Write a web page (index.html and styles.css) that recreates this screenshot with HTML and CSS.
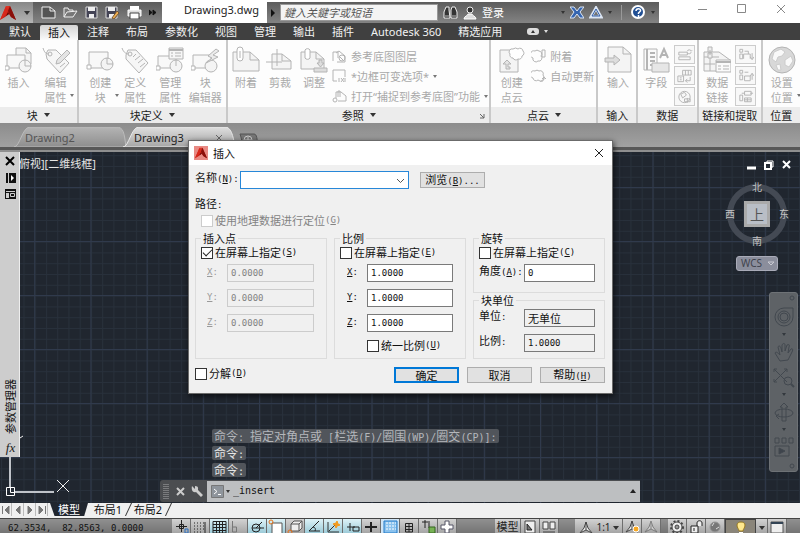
FILE: index.html
```html
<!DOCTYPE html>
<html lang="zh-CN">
<head>
<meta charset="utf-8">
<title>Drawing3.dwg</title>
<link rel="stylesheet" href="styles.css">
</head>
<body>
<svg class="defs" aria-hidden="true">
  <defs>
    <linearGradient id="red" x1="0" y1="0" x2="1" y2="1"><stop offset="0" stop-color="#f0503a"/><stop offset=".5" stop-color="#c81e14"/><stop offset="1" stop-color="#7c0c08"/></linearGradient>
    <linearGradient id="tabOff" x1="0" y1="0" x2="0" y2="1"><stop offset="0" stop-color="#b4b4b4"/><stop offset="1" stop-color="#8e8e8e"/></linearGradient>
    <linearGradient id="tabOn" x1="0" y1="0" x2="0" y2="1"><stop offset="0" stop-color="#dedede"/><stop offset="1" stop-color="#a6a6a6"/></linearGradient>
    <symbol id="logo" viewBox="0 0 16 16"><path d="M0 15 L6 1 H10 L16 15 L11 12 L9 9 L5 12 Z" fill="url(#red)"/><path d="M6 1 L8 8 L0 15Z" fill="#d8281c"/><path d="M10 1 L16 15 L11 12 L8 6Z" fill="#8a0f0a"/><path d="M8 7 L9 9 L6 11Z" fill="#5d0a06"/></symbol>
    <symbol id="block" viewBox="0 0 28 28"><path d="M11 9V2H21L26 7V18" fill="#f4f4f4"/><path d="M21 2V7H26"/><path d="M2 9H20V22H2Z" fill="#f8f8f8"/><circle cx="20" cy="20" r="6" fill="#f4f4f4"/><path d="M20 20V14M20 20H26"/><path d="M0 20H4V24H0Z" fill="#fff"/></symbol>
    <symbol id="create" viewBox="0 0 28 28"><path d="M3 6H22V22H3Z" fill="#f8f8f8"/><circle cx="21" cy="18" r="6" fill="#f4f4f4"/><path d="M21 18V12M21 18H27"/><path d="M1 19H5V23H1Z" fill="#fff"/></symbol>
    <symbol id="tag" viewBox="0 0 28 28"><path d="M5 9L7 4L15 4L27 17L18 27L5 13Z" fill="#f6f6f6"/><circle cx="9" cy="8" r="2"/><path d="M8 8C4 8 2 5 1 2M12 11L15 8M14 14L19 10M17 17L22 13M19 21L24 17" /></symbol>
    <symbol id="tagpen" viewBox="0 0 28 28"><path d="M4 8L6 4L14 4L27 17L18 27L5 13Z" fill="#f6f6f6"/><circle cx="8" cy="8" r="2"/><path d="M7 8C3 8 2 5 1 2M18 21L23 17"/><path d="M14 18L15 14L25 4L28 7L18 17Z" fill="#e4e4e4"/></symbol>
    <symbol id="manage" viewBox="0 0 28 28"><path d="M2 10H20V22H2Z" fill="#f8f8f8"/><circle cx="20" cy="20" r="6" fill="#f4f4f4"/><path d="M20 20V14"/><path d="M0 20H4V24H0Z" fill="#fff"/><path d="M13 2H27V13H13Z" fill="#f6f6f6"/><path d="M13 4H27" stroke-width="2"/><path d="M15 7H17M19 7H25M15 10H17M19 10H25"/></symbol>
    <symbol id="editor" viewBox="0 0 28 28"><path d="M2 9H20V22H2Z" fill="#f8f8f8"/><circle cx="20" cy="20" r="6" fill="#f4f4f4"/><path d="M0 20H4V24H0Z" fill="#fff"/><path d="M25 3L17 10L21 12L15 17L27 11L22 9L28 5Z" fill="#ececec"/></symbol>
    <symbol id="clip" viewBox="0 0 28 28"><path d="M1 6H18L27 14V25H1Z" fill="#f4f4f4"/><path d="M18 6V14H27"/><path d="M5 12V4A3 3 0 0 1 11 4V12A3 3 0 0 1 5 12ZM8 5V12" fill="#fff"/></symbol>
    <symbol id="crop" viewBox="0 0 28 28"><path d="M6 8H16L25 15V23H6Z" fill="#f4f4f4"/><path d="M16 8V15H25M0 16H16M11 3V20"/></symbol>
    <symbol id="adjust" viewBox="0 0 28 28"><path d="M1 6H16L24 13V23H1Z" fill="#f4f4f4"/><path d="M16 6V13H24"/><path d="M5 12V4A3 3 0 0 1 10 4V12A3 3 0 0 1 5 12Z" fill="#fff"/><path d="M14 26H27V22H14ZM17 17H19V14H22V17H24L20.500 21Z" fill="#ddd"/></symbol>
    <symbol id="cloud" viewBox="0 0 28 28"><path d="M2 4H20V26H2Z" fill="#f4f4f4"/><path d="M15 3A4 4 0 0 1 20 3A3 3 0 0 1 25 5A3 3 0 0 1 24 10A3 3 0 0 1 20 13A3 3 0 0 1 15 12A3 3 0 0 1 12 8A3 3 0 0 1 15 3Z" fill="#fff"/><path d="M12 23H8V18H5L9 14L13 18H10V21H12Z" fill="#e4e4e4"/></symbol>
    <symbol id="import" viewBox="0 0 28 28"><path d="M4 1H19L27 8V26H4Z" fill="#f4f4f4"/><path d="M19 1V8H27"/><path d="M1 12H10V9L16 14L10 19V16H1Z" fill="#ddd"/></symbol>
    <symbol id="field" viewBox="0 0 28 28"><path d="M2 3H15V24H2Z" fill="#fafafa"/><path d="M5 3V24M8 7H13M8 11H13M8 15H13M8 19H13" stroke-width="2"/><path d="M18 12L22 3L26 12M20 9H24" stroke-width="2"/><path d="M10 17H27V26H10Z" fill="#e6e6e6"/></symbol>
    <symbol id="datalink" viewBox="0 0 28 28"><path d="M1 6H16L27 14V25H1Z" fill="#f4f4f4"/><path d="M1 11H16M1 18H12M7 6V25"/><path d="M5 1H9V6H5ZM5 7H9V12H5ZM7 4V9" fill="#eee"/><path d="M13 14H28V26H13Z" fill="#fafafa"/><path d="M13 16H28" stroke-width="2"/><path d="M15 20H18M20 20H26M15 23H18M20 23H26"/></symbol>
    <symbol id="globe" viewBox="0 0 28 28"><circle cx="14" cy="14" r="13" fill="#d8d8d8"/><path d="M6 6L13 3L17 6L14 10L10 11L8 16L4 13ZM17 14L23 10L25 15L21 21L17 19ZM8 19L12 18L13 24L10 24Z" fill="#f9f9f9" stroke="#ccc"/></symbol>
    <symbol id="scale" viewBox="0 0 16 16"><path d="M8 2L10 8L14 13L8 10L2 13L6 8Z" fill="#eee" stroke="#444"/><path d="M8 2V10" stroke="#444"/></symbol>
    <pattern id="minor" width="11.24" height="10.8" patternUnits="userSpaceOnUse" x="1" y="3.2"><path d="M.5 0V10.8M0 .5H11.24" stroke="#28303b" fill="none"/></pattern>
    <pattern id="major" width="56.2" height="54" patternUnits="userSpaceOnUse" x="34.2" y="35"><path d="M.5 0V54M0 .5H56.2" stroke="#303a4c" fill="none"/></pattern>
  </defs>
</svg>

<div class="app">
  <header class="titlebar">
    <button class="appmenu" aria-label="应用程序菜单"><svg width="16" height="18"><use href="#logo"/></svg><i class="tri"></i></button>
    <nav class="quick">
      <svg width="15" height="13" viewBox="0 0 15 13"><path d="M1 1H9L14 5V12H1Z" fill="#555" stroke="#eee"/><path d="M9 1V5H14" fill="none" stroke="#eee"/></svg>
      <svg width="15" height="13" viewBox="0 0 15 13"><path d="M1 11V2H5L6 4H10V6M1 11L4 6L14 5L10 11Z" fill="#777" stroke="#eee"/></svg>
      <svg width="13" height="13" viewBox="0 0 13 13"><path d="M1 1H12V12H1Z" fill="#445" stroke="#ddd"/><path d="M3 1H10V5H3ZM4 8H9V12H4Z" fill="#eee"/></svg>
      <svg width="15" height="13" viewBox="0 0 15 13"><path d="M1 1H12V12H1Z" fill="#445" stroke="#ddd"/><path d="M3 1H10V5H3ZM4 8H9V12H4Z" fill="#eee"/><path d="M7 12L12 5L14 7L9 13Z" fill="#f0b050" stroke="#753"/></svg>
      <svg width="15" height="13" viewBox="0 0 15 13"><path d="M3 0H12V4H3Z" fill="#fff"/><path d="M1 4H14V10H1Z" fill="#ddd" stroke="#fff"/><path d="M3 7H12V13H3Z" fill="#fff" stroke="#444"/></svg>
      <svg width="8" height="7" viewBox="0 0 8 7"><path d="M0 1L3 3.5L0 6ZM4 1L7 3.5L4 6Z" fill="#111" stroke="#111"/></svg>
    </nav>
    <span class="filename">Drawing3.dwg</span>
    <div class="infocenter">
      <i class="tri right"></i>
      <input class="search" type="text" placeholder="鍵入关鍵字或短语" aria-label="搜索">
      <svg width="15" height="14" viewBox="0 0 15 14"><path d="M3 1H6V4L7 12H1V6ZM9 1H12L14 6V12H8V4Z" fill="#333" stroke="#eee"/><path d="M2 9H6V12H2ZM9 9H13V12H9Z" fill="#777"/></svg>
      <svg width="14" height="14" viewBox="0 0 14 14"><circle cx="7" cy="4" r="3" fill="#333" stroke="#eee"/><path d="M1 13C1 10 5 10 5 8H9C9 10 13 10 13 13Z" fill="#ddd" stroke="#fff"/></svg>
      <a class="signin" href="#">登录</a>
      <i class="tri small push"></i>
      <svg width="14" height="13" viewBox="0 0 14 13"><path d="M0 1H4L7 5L10 1H14L10 6L14 12H10L7 8L4 12H0L4 6Z" fill="#3565b0" stroke="#dce6f4"/></svg>
      <svg width="14" height="13" viewBox="0 0 14 13"><path d="M7 2L12 11H2Z" fill="none" stroke="#dce6f4" stroke-width="3"/><path d="M7 3L11 10H3Z" fill="none" stroke="#335fa8"/></svg>
      <i class="tri small"></i><i class="vline"></i>
      <svg width="15" height="15" viewBox="0 0 15 15"><circle cx="7" cy="7" r="6" fill="#204f94" stroke="#fff" stroke-width="2"/><path d="M5 6C5 3 10 3 9.500 6L7.500 8V9M7.500 10V12" fill="none" stroke="#fff" stroke-width="1.500"/></svg>
      <i class="tri small"></i>
    </div>
    <div class="winctl">
      <button aria-label="最小化"><svg width="10" height="10"><path d="M0 5.500H9"/></svg></button>
      <button aria-label="最大化"><svg width="10" height="10"><path d="M.5.5H8.500V8.500H.5Z"/></svg></button>
      <button aria-label="关闭"><svg width="10" height="10"><path d="M1 1L9 9M9 1L1 9"/></svg></button>
    </div>
  </header>

  <nav class="tabs">
    <button>默认</button><button class="on">插入</button><button>注释</button><button>布局</button><button>参数化</button><button>视图</button><button>管理</button><button>输出</button><button>插件</button><button>Autodesk 360</button><button>精选应用</button>
    <i class="pill"></i><i class="tri small light"></i>
  </nav>

  <section class="ribbon">
    <div class="panel p1"><div class="tools">
      <button class="tool"><svg><use href="#block"/></svg>插入</button>
      <button class="tool drop"><svg><use href="#tagpen"/></svg>编辑<br>属性</button>
    </div><h2>块<i class="tri"></i></h2></div>
    <div class="panel p2"><div class="tools">
      <button class="tool drop"><svg><use href="#create"/></svg>创建<br>块</button>
      <button class="tool"><svg><use href="#tag"/></svg>定义<br>属性</button>
      <button class="tool"><svg><use href="#manage"/></svg>管理<br>属性</button>
      <button class="tool"><svg><use href="#editor"/></svg>块<br>编辑器</button>
    </div><h2>块定义<i class="tri"></i></h2></div>
    <div class="panel p3"><div class="tools">
      <button class="tool"><svg><use href="#clip"/></svg>附着</button>
      <button class="tool"><svg><use href="#crop"/></svg>剪裁</button>
      <button class="tool"><svg><use href="#adjust"/></svg>调整</button>
      <div class="list">
        <button><svg viewBox="0 0 15 14"><path d="M1 12V3H6V9M4 4L7 2L13 7V13H5M7 7L11 11"/><circle cx="10" cy="9" r="3"/></svg>参考底图图层</button>
        <button><svg viewBox="0 0 15 14"><path d="M1 12V1H13V8M1 12H5M7 9V13M13 9V13M9 9L12 13M12 9L9 13"/></svg>*边框可变选项*<i class="tri small"></i></button>
        <button><svg viewBox="0 0 15 14"><path d="M4 9V3H9L14 7V12H6M6 8V2H8V8"/><circle cx="3" cy="11" r="2"/></svg>打开“捕捉到参考底图”功能<i class="tri small"></i></button>
      </div>
    </div><h2>参照<i class="tri"></i><svg class="launch" width="6" height="6" viewBox="0 0 6 6"><path d="M1 1L5 5M5 1V5H1"/></svg></h2></div>
    <div class="panel p4"><div class="tools">
      <button class="tool"><svg><use href="#cloud"/></svg>创建<br>点云</button>
      <div class="list">
        <button><svg viewBox="0 0 15 14"><path d="M4 2A3 3 0 0 1 8 2A3 3 0 0 1 10 7A3 3 0 0 1 7 12A3 3 0 0 1 2 9A3 3 0 0 1 4 2ZM11 1H14V8H11Z"/></svg>附着</button>
        <button><svg viewBox="0 0 15 14"><path d="M4 2A3 3 0 0 1 8 2A3 3 0 0 1 12 6A3 3 0 0 1 7 11A3 3 0 0 1 2 9A3 3 0 0 1 4 2ZM9 12C11 13 13 12 13 9M11 10L13 8L15 10"/></svg>自动更新</button>
      </div>
    </div><h2>点云<i class="tri"></i></h2></div>
    <div class="panel p5"><div class="tools">
      <button class="tool"><svg><use href="#import"/></svg>输入</button>
    </div><h2>输入</h2></div>
    <div class="panel p6"><div class="tools">
      <button class="tool"><svg><use href="#field"/></svg>字段</button>
      <div class="minis">
        <button aria-label="更新字段"><svg viewBox="0 0 18 16"><path d="M3 5H12V8H3ZM3 10H15V13H3Z"/><path d="M12 4C12 2 16 2 16 4L17 3M16 5C16 7 13 7 12 6"/></svg></button>
        <button aria-label="OLE 对象"><svg viewBox="0 0 18 16"><path d="M7 2H16V7H7ZM10 2V7M13 2V7M2 8H8V14H2ZM4 10H6M4 12H6M15 9V13H10M12 11L10 13L12 15"/></svg></button>
        <button aria-label="超链接"><svg viewBox="0 0 18 16"><circle cx="9" cy="8" r="6"/><path d="M5 5L9 3L11 6L7 9ZM9 10H15V13H9ZM12 9V14"/></svg></button>
      </div>
    </div><h2>数据</h2></div>
    <div class="panel p7"><div class="tools">
      <button class="tool"><svg><use href="#datalink"/></svg>数据<br>链接</button>
      <div class="minis">
        <button aria-label="从源下载"><svg viewBox="0 0 18 16"><path d="M3 2H6V5H3ZM3 7H6V12H3ZM8 4H12V7M7 12V7H14V12M16 6V12M14 10L16 13L18 10"/></svg></button>
        <button aria-label="上载到源"><svg viewBox="0 0 18 16"><path d="M3 2H6V5H3ZM3 7H6V12H3ZM8 4H12M8 13V8H14V13H8M16 12V6M14 8L16 5L18 8"/></svg></button>
        <button aria-label="提取数据"><svg viewBox="0 0 18 16"><path d="M8 2H15V6H8ZM3 6H6V12H3ZM8 9H15V13H8ZM8 11H15M11 9V13M5 4H8M14 4H17"/></svg></button>
      </div>
    </div><h2>链接和提取</h2></div>
    <div class="panel p8"><div class="tools">
      <button class="tool drop"><svg><use href="#globe"/></svg>设置<br>位置</button>
    </div><h2>位置</h2></div>
  </section>

  <nav class="doctabs">
    <button class="doc"><svg class="shape" viewBox="0 0 112 20" preserveAspectRatio="none"><path d="M0 20C6 20 8 0 16 0H102C110 0 110 6 112 20Z" fill="url(#tabOff)" stroke="#bbb"/></svg><span>Drawing2</span></button>
    <button class="doc on"><svg class="shape" viewBox="0 0 112 20" preserveAspectRatio="none"><path d="M0 20C6 20 8 0 16 0H102C108 0 110 8 112 20Z" fill="url(#tabOn)" stroke="#e8e8e8"/></svg><span>Drawing3</span><svg class="x" width="8" height="8"><path d="M1 1L7 7M7 1L1 7"/></svg></button>
    <button class="add" aria-label="新建"><svg width="20" height="16" viewBox="0 0 20 16"><path d="M1 3H15C18 3 18 8 19 16H8C3 16 3 8 1 3Z" fill="#777" stroke="#555"/><circle cx="9" cy="9" r="4" fill="none" stroke="#ccc"/><path d="M9 6V12M6 9H12" stroke="#ccc"/></svg></button>
  </nav>

  <main class="canvas">
    <svg class="grid" width="100%" height="100%"><rect width="100%" height="100%" fill="url(#minor)"/><rect width="100%" height="100%" fill="url(#major)"/></svg>
    <span class="viewlabel">俯视][二维线框]</span>
    <svg class="ucs" width="74" height="80" viewBox="0 0 74 80"><path d="M10 0V64M15 69H54" stroke="#bfc3c9" stroke-width="2"/><path d="M6.500 64.500H14.500V72.500H6.500ZM10.500 65V69.500H14" fill="none" stroke="#fff"/><path d="M57 57L69 69M69 57L57 69M20 15L23 13" stroke="#eee" fill="none"/></svg>
    <aside class="palette">
      <svg width="11" height="11" viewBox="0 0 11 11"><path d="M1 1L9 9M9 1L1 9" stroke="#000" stroke-width="2"/></svg>
      <svg width="10" height="10" viewBox="0 0 10 10"><path d="M0 0H2V10H0ZM3 0H10V10H3Z"/><path d="M5 2L8 5L5 8Z" fill="#fff"/></svg>
      <svg width="11" height="10" viewBox="0 0 11 10"><path d="M0 0H11V10H0Z"/><path d="M1 2.500H10M5.500 4.500H9.500V7.500H5.500Z" stroke="#ccc" fill="none"/><path d="M1 4H4V9H1Z" fill="#ccc"/></svg>
      <span class="ptitle">参数管理器</span>
      <i class="fx">fx</i>
    </aside>
    <div class="vpctl">
      <svg width="9" height="10"><path d="M0 8H9" stroke="#fff" stroke-width="3"/></svg>
      <svg width="10" height="10" viewBox="0 0 10 10"><path d="M3 2V1H9V7H8" stroke="#fff" fill="none"/><path d="M1 3H7V9H1Z" stroke="#fff" stroke-width="2" fill="none"/></svg>
      <svg width="9" height="10"><path d="M1 1L8 8M8 1L1 8" stroke="#fff" stroke-width="2"/></svg>
    </div>
    <div class="compass">
      <span class="n">北</span><span class="w">西</span>
      <button class="cube">上</button>
      <span class="e">东</span><span class="s">南</span>
    </div>
    <button class="wcs">WCS<svg width="8" height="5"><path d="M1 1H7L4 4Z"/></svg></button>
    <nav class="navbar">
      <svg class="knob" width="6" height="6"><circle cx="3" cy="3" r="2"/></svg>
      <svg width="20" height="20" viewBox="0 0 20 20"><path d="M10 1H19V10A9 9 0 1 1 10 1Z"/><circle cx="10" cy="10" r="6"/><circle cx="10" cy="10" r="4"/></svg>
      <i class="tri small"></i>
      <svg width="20" height="20" viewBox="0 0 20 20"><path d="M6 19L1 11C2 9 4 11 6 13L4 5C5 3 6 4 7 6L8 10V3C9 1 11 1 11 3V9L13 3C15 2 16 3 15 5L14 11L17 7C19 6 19 8 18 10L14 18Z"/></svg>
      <svg width="22" height="20" viewBox="0 0 22 20"><path d="M1 1L14 14M14 1L1 14M1 4V1H4M11 1H14V4M1 11V14H4"/><circle cx="15" cy="13" r="4"/><path d="M18 16L21 19" stroke-width="2"/></svg>
      <i class="tri small"></i>
      <svg width="20" height="20" viewBox="0 0 20 20"><path d="M8 19V5H6L10 1L14 5H12V19Z"/><ellipse cx="10" cy="11" rx="9" ry="4"/><path d="M5 12L2 14L5 17"/></svg>
      <i class="tri small"></i>
      <svg width="20" height="20" viewBox="0 0 20 20"><path d="M1 1H5V6H1ZM8 1H12V6H8ZM15 1H19V6H15ZM1 9H15V19H1Z"/><path d="M5 11L11 14L5 17Z" fill="#3e444c"/></svg>
      <svg class="knob" width="6" height="6"><circle cx="3" cy="3" r="2"/></svg>
    </nav>
    <div class="console">
      <p class="hist dim">命令<b>: </b>指定对角点或<b> [</b>栏选<b>(F)/</b>圈围<b>(WP)/</b>圈交<b>(CP)]:</b></p>
      <p class="hist">命令<b>:</b></p>
      <p class="hist">命令<b>:</b></p>
      <div class="cmd">
        <svg width="8" height="16" viewBox="0 0 8 16"><path d="M1 1V16M3 1V16M5 1V16" stroke="#aaa" stroke-dasharray="1 1"/></svg>
        <svg width="9" height="9"><path d="M1 1L8 8M8 1L1 8" stroke="#ccc" stroke-width="2"/></svg>
        <svg width="14" height="14" viewBox="0 0 14 14"><path d="M2 2L5 5V2C9 2 8 5 8 6L13 11L11 13L6 8C3 9 1 6 2 2Z" fill="#ccc"/></svg>
        <label class="entry"><svg width="13" height="13" viewBox="0 0 13 13"><path d="M.5.5H12.500V12.500H.5Z" fill="#8f959c" stroke="#777"/><path d="M3 4L6 6.500L3 9M7 9.500H10" fill="none" stroke="#fff"/></svg><i class="tri small"></i><input type="text" value="_insert" aria-label="命令"><i class="tri up"></i></label>
      </div>
    </div>
  </main>

  <nav class="layouts">
    <span class="steps">
      <button aria-label="第一个"><svg width="10" height="10"><path d="M1.500 1V9M8 1V9L4 5Z"/></svg></button><button aria-label="上一个"><svg width="10" height="10"><path d="M7 1V9L3 5Z"/></svg></button><button aria-label="下一个"><svg width="10" height="10"><path d="M3 1V9L7 5Z"/></svg></button><button aria-label="最后一个"><svg width="10" height="10"><path d="M8.500 1V9M2 1V9L6 5Z"/></svg></button>
    </span>
    <button class="lay on">模型</button><button class="lay">布局1</button><button class="lay">布局2</button>
  </nav>

  <footer class="status">
    <output>62.3534,  82.8563, 0.0000</output>
    <button><svg><path d="M3 7.500H14M8.500 1V13"/><path d="M6.500 5.500H10.500V9.500H6.500Z"/><path d="M12 10H15V14H12Z" stroke="#2a6fc0"/></svg></button>
    <button><svg><path d="M2 4H14M2 7H14M2 10H14M2 13H10" stroke-dasharray="1 2"/><path d="M13 3V14"/></svg></button>
    <button class="on"><svg><path d="M2 2.500H15V14H2ZM2 5.500H15M2 8.500H15M2 11.500H15M5.500 2V14M8.500 2V14M11.500 2V14"/></svg></button>
    <button><svg><path d="M2.500 2V13H6.500V8H2M6 13" stroke="#777"/></svg></button>
    <button class="on"><svg><circle cx="7" cy="9" r="4"/><path d="M3 9H15M7 9L13 3"/></svg></button>
    <button class="on"><svg><path d="M4 4H14V15H4Z" fill="#fff" stroke="#555"/><circle cx="3" cy="3" r="2" stroke="#e67318"/></svg></button>
    <button><svg><path d="M4 5L7 2H15V9L12 12H4ZM4 5H12V12M12 5L15 2" fill="#eee" stroke="#555"/><circle cx="3" cy="13" r="2" stroke="#e67318"/></svg></button>
    <button class="on"><svg><path d="M13 2L3 12H14M7 8C9 8 10 10 9 12"/></svg></button>
    <button class="on"><svg><path d="M3 3V13H14M4 12L10 6" stroke="#333"/><path d="M12 2L13 5L15 6L12 7L11 9L10 6L8 5L11 4Z" fill="#f39a1c" stroke="#f39a1c"/></svg></button>
    <button class="on"><svg><path d="M3 8H11M6 4V12M9 8H15V12H9Z"/></svg></button>
    <button><svg><path d="M2 8H14M8 3V13" stroke-width="2"/></svg></button>
    <button class="blue"><svg><path d="M2 2H15V14H2Z" fill="#8ac2ee" stroke="#247bc7"/><path d="M4 4H14M4 7H14M4 10H14" stroke="#fff" stroke-dasharray="2 1"/></svg></button>
    <button><svg><path d="M4.500 4.500H11.500V13H4.500ZM5 7.500H12M5 10.500H12M8 4V13"/></svg></button>
    <button><svg><path d="M2 3H10M5 1V9M9 4V9H13"/><path d="M9 8H15V14H9Z" fill="#77b255" stroke="#35651e"/></svg></button>
    <button><svg><path d="M6 2H10V6H14V10H10V14H6V10H2V6H6Z" fill="#fff" stroke="#556"/></svg></button>
    <i class="gap wide"></i>
    <button class="model">模型</button>
    <button><svg><path d="M3 2H13V14H3Z" fill="#eee" stroke="#444"/><path d="M5 5V11H10Z" fill="#777"/></svg></button>
    <button><svg><path d="M2 3H7V10H2ZM9 3H14V10H9ZM2 13H14" fill="#eee" stroke="#444"/></svg></button>
    <i class="gap"></i>
    <button class="ratio"><svg><use href="#scale"/></svg>1:1<i class="tri"></i></button>
    <button><svg><use href="#scale"/><circle cx="12" cy="10" r="3" fill="#f7a823" stroke="#fff"/></svg></button>
    <button><svg opacity=".5"><use href="#scale"/></svg></button>
    <i class="gap thin"></i>
    <button><svg><circle cx="8" cy="8" r="6" stroke="#444" stroke-width="2" stroke-dasharray="2 2"/><circle cx="8" cy="8" r="5" fill="#eee" stroke="#444"/><circle cx="8" cy="8" r="2" fill="#999" stroke="#444"/></svg></button>
    <button><svg><path d="M3 7H10V14H3ZM9 7V4C9 1 14 1 14 4V7M6 9V12" fill="#eee"/></svg></button>
    <button><svg><circle cx="8" cy="8" r="5" fill="#777" stroke="#999"/><path d="M5 7L7 4M9 10L12 8" stroke="#ddd"/></svg></button>
    <button class="bulb"><svg><path d="M6 11C6 9 4 8 4 5C4 1 12 1 12 5C12 8 10 9 10 11Z" fill="#ffe88e" stroke="#9a7b20"/><path d="M6 13H10" stroke="#fff" stroke-width="2"/></svg></button>
    <button class="arrow" aria-label="状态栏菜单"><i class="tri"></i></button>
    <button><svg><path d="M2 3H14V14H2Z" fill="#eee" stroke="#555"/><path d="M2 4H14" stroke="#345" stroke-width="2"/></svg></button>
    <i class="gap end"></i>
  </footer>
</div>

<form class="dialog" role="dialog" aria-labelledby="dlg-title">
  <div class="dtitle"><span class="dlogo"><svg width="12" height="12"><use href="#logo"/></svg></span><h1 id="dlg-title">插入</h1><button type="button" aria-label="关闭"><svg width="10" height="10"><path d="M1 1L9 9M9 1L1 9"/></svg></button></div>
  <div class="dbody">
    <div class="namerow">
      <label for="name">名称<b>(<u>N</u>):</b></label>
      <span class="combo"><select id="name"><option></option></select><svg width="9" height="6"><path d="M1 1L4.500 4.500L8 1"/></svg></span>
      <button type="button">浏览<b>(<u>B</u>)...</b></button>
    </div>
    <p class="path">路径<b>:</b></p>
    <label class="check off geo"><input type="checkbox" disabled>使用地理数据进行定位<b>(<u>G</u>)</b></label>
    <div class="groups">
      <fieldset class="ins"><legend>插入点</legend>
        <label class="check"><input type="checkbox" checked>在屏幕上指定<b>(<u>S</u>)</b></label>
        <div class="row"><label for="ix"><b><u>X</u>:</b></label><input id="ix" type="text" value="0.0000" disabled></div>
        <div class="row"><label for="iy"><b><u>Y</u>:</b></label><input id="iy" type="text" value="0.0000" disabled></div>
        <div class="row"><label for="iz"><b><u>Z</u>:</b></label><input id="iz" type="text" value="0.0000" disabled></div>
      </fieldset>
      <fieldset class="scl"><legend>比例</legend>
        <label class="check"><input type="checkbox">在屏幕上指定<b>(<u>E</u>)</b></label>
        <div class="row"><label for="sx"><b><u>X</u>:</b></label><input id="sx" type="text" value="1.0000"></div>
        <div class="row"><label for="sy"><b><u>Y</u>:</b></label><input id="sy" type="text" value="1.0000"></div>
        <div class="row"><label for="sz"><b><u>Z</u>:</b></label><input id="sz" type="text" value="1.0000"></div>
        <label class="check uni"><input type="checkbox">统一比例<b>(<u>U</u>)</b></label>
      </fieldset>
      <div class="stack">
        <fieldset class="rot"><legend>旋转</legend>
          <label class="check"><input type="checkbox">在屏幕上指定<b>(<u>C</u>)</b></label>
          <div class="row"><label for="ra">角度<b>(<u>A</u>):</b></label><input id="ra" type="text" value="0"></div>
        </fieldset>
        <fieldset class="unit"><legend>块单位</legend>
          <div class="row"><label for="uu">单位<b>:</b></label><input id="uu" class="cjk" type="text" value="无单位" readonly></div>
          <div class="row"><label for="us">比例<b>:</b></label><input id="us" type="text" value="1.0000" readonly></div>
        </fieldset>
      </div>
    </div>
    <div class="actions">
      <label class="check"><input type="checkbox">分解<b>(<u>D</u>)</b></label>
      <button type="submit" class="primary">确定</button>
      <button type="button">取消</button>
      <button type="button">帮助<b>(<u>H</u>)</b></button>
    </div>
  </div>
</form>
</body>
</html>
```
FILE: styles.css
```css
* { box-sizing: border-box; }
body { margin: 0; font: 11px/15px "Noto Sans", "Noto Sans CJK SC", sans-serif; color: #222; overflow: hidden; }
button, input, select { font: inherit; color: inherit; margin: 0; padding: 0; border: 0; background: none; }
h1, h2, p { margin: 0; font-size: 11px; font-weight: 400; }
i { font-style: normal; }
svg { display: block; flex: none; fill: none; }
.defs { position: absolute; width: 0; height: 0; }

.tri { flex: none; width: 0; height: 0; border: 3px solid transparent; border-top: 4px solid #333; border-bottom: 0; }
.tri.small { border-width: 2px; border-top-width: 3px; border-bottom: 0; }
.tri.light { border-top-color: #ddd; }
.tri.right { border: 4px solid transparent; border-left-color: #111; border-right: 0; }
.tri.up { border: 3px solid transparent; border-bottom: 4px solid #222; border-top: 0; }

.app { display: flex; flex-direction: column; height: 100vh; }

/* Title bar */
.titlebar { display: flex; height: 23px; background: #fff; }
.appmenu { display: flex; align-items: center; gap: 8px; width: 33px; margin-top: 2px; background: linear-gradient(#888, #b4b4b4); }
.quick { display: flex; align-items: center; gap: 7px; width: 129px; margin-top: 2px; padding-left: 8px; background: linear-gradient(#5c5c5c, #838383); }
.filename { width: 105px; padding: 2px 0 0 22px; }
.infocenter { display: flex; align-items: center; flex: 1; gap: 5px; margin-top: 2px; padding: 0 4px; background: linear-gradient(#5c5c5c, #838383); }
.search { width: 158px; height: 17px; padding: 0 3px; background: #f4f4f4; border: 1px solid #999; font-style: italic; }
.search::placeholder { color: #555; opacity: 1; }
.signin { color: #fff; text-decoration: none; }
.push { margin-left: auto; }
.vline { width: 1px; height: 15px; margin: 0 4px; background: #999; }
.winctl { display: flex; width: 141px; justify-content: space-around; padding-left: 24px; }
.winctl button { display: flex; align-items: center; height: 18px; }
.winctl path { stroke: #888; }

/* Ribbon tabs */
.tabs { display: flex; align-items: center; gap: 1px; height: 17px; padding-left: 1px; background: #404040; color: #f2f2f2; }
.tabs button { height: 17px; padding: 0 8px; white-space: nowrap; }
.tabs .on { align-self: end; height: 15px; line-height: 14px; background: linear-gradient(#d4d4d4, #fafafa); color: #111; border-radius: 2px 2px 0 0; }
.pill { position: relative; width: 12px; height: 7px; margin: 0 4px 0 16px; background: #ddd; border-radius: 3px; }
.pill::after { content: ""; position: absolute; left: 4px; top: 2px; border: 2px solid transparent; border-bottom: 3px solid #333; border-top: 0; }

/* Ribbon panels */
.ribbon { display: flex; height: 83px; background: #fdfdfd; }
.panel { display: flex; flex-direction: column; flex: 1 1 0; min-width: 0; border-right: 2px solid #c9c9c9; }
.p1 { flex-grow: 78; } .p2 { flex-grow: 150; } .p3 { flex-grow: 266; } .p4 { flex-grow: 107; }
.p5 { flex-grow: 38; } .p6 { flex-grow: 60; } .p7 { flex-grow: 63; } .p8 { flex-grow: 38; border: 0; }
.tools { display: flex; flex: 1; align-items: start; padding: 6px 0 0 1px; color: #a9a9a9; stroke: #b4b4b4; }
.p1 .tools { gap: 2px; }
.p2 .tools { padding-left: 4px; }
.p4 .tools { padding-left: 3px; }
.p5 .tools { padding-left: 2px; }
.tool { position: relative; flex: none; width: 35px; white-space: nowrap; text-align: center; }
.tool svg { width: 28px; height: 28px; margin: 0 auto 1px; }
.tool.drop::after { content: ""; position: absolute; right: -1px; bottom: 8px; border: 2px solid transparent; border-top: 3px solid #777; border-bottom: 0; }
.p3 .tool { width: 34px; }
.p8 .tool { width: 36px; }
.panel h2 { position: relative; display: flex; align-items: center; justify-content: center; gap: 6px; height: 16px; background: #ececec; white-space: nowrap; }
.launch { position: absolute; right: 4px; top: 6px; stroke: #666; }
.list { display: flex; flex-direction: column; margin-left: 2px; }
.list button { display: flex; align-items: center; gap: 4px; height: 20px; white-space: nowrap; }
.list svg { width: 15px; height: 14px; }
.p3 .list { margin-left: 1px; }
.list .tri { border-top-color: #777; }
.minis { display: flex; flex-direction: column; gap: 2px; margin-top: -1px; }
.minis button { width: 21px; height: 19px; padding: 0 1px; border: 1px solid #ccc; background: #f8f8f8; }
.minis svg { width: 17px; height: 16px; }

/* Drawing tabs */
.doctabs { display: flex; align-items: end; height: 29px; padding-left: 14px; background: linear-gradient(#8c8c8c, #a4a4a4); border-bottom: 2px solid #8f8f8f; box-shadow: inset 0 -3px #585858; padding-bottom: 3px; }
.doc { position: relative; width: 112px; height: 20px; padding-left: 11px; text-align: left; color: #555; }
.doc.on { margin-left: -3px; color: #222; }
.doc span { position: relative; }
.shape { position: absolute; inset: 0; width: 100%; height: 100%; }
.doc .x { position: absolute; right: 12px; top: 7px; stroke: #666; }
.add { margin-left: 4px; }

/* Drawing area */
.canvas { position: relative; flex: 1; min-height: 0; overflow: hidden; background: #20262f; }
.grid { position: absolute; inset: 0; }
.viewlabel { position: absolute; left: 19px; top: 4px; color: #e4e4e4; }
.palette { position: absolute; left: 0; top: 0; display: flex; flex-direction: column; align-items: center; gap: 6px; width: 20px; height: 305px; padding: 4px 0 1px 2px; background: #cdcdcd; border-right: 1px solid #eee; }
.palette svg { fill: #111; }
.ptitle { margin-top: auto; writing-mode: vertical-rl; text-orientation: sideways; transform: rotate(180deg); color: #111; }
.fx { font: italic 13px/16px "Liberation Serif", serif; }
.ucs { position: absolute; left: 0; bottom: 0; height: 80px; }
.vpctl { position: absolute; right: 9px; top: 8px; display: flex; gap: 8px; }
.compass { position: absolute; right: 8px; top: 27px; width: 70px; height: 70px; display: grid; grid-template: 16px 38px 16px / 16px 38px 16px; place-items: center; color: #c4c4c4; font-size: 10px; }
.compass::before { content: ""; position: absolute; inset: 5px; border: 6px solid #444a54; border-radius: 50%; }
.compass span { position: relative; }
.compass .n { grid-area: 1 / 2; } .compass .w { grid-area: 2 / 1; } .compass .e { grid-area: 2 / 3; } .compass .s { grid-area: 3 / 2; }
.cube { grid-area: 2 / 2; width: 26px; height: 26px; background: #b9bec6; border: 3px solid #aaa; color: #555; font-size: 14px; }
.wcs { position: absolute; right: 22px; top: 104px; display: flex; align-items: center; gap: 5px; width: 42px; height: 15px; padding-left: 4px; background: #8b8e9c; border: 1px solid #a9abb8; border-radius: 3px; color: #3f434d; font-size: 10px; }
.wcs svg { stroke: #c9cad2; }
.navbar { position: absolute; right: 2px; top: 140px; display: flex; flex-direction: column; align-items: center; justify-content: space-between; width: 29px; height: 180px; padding: 2px 0; background: #5e6266; border: 1px solid #6e7276; border-radius: 3px; stroke: #42484f; }
.knob { align-self: end; margin-right: 2px; }
.navbar .tri { border-top-color: #33383e; }

.console { position: absolute; left: 160px; right: 160px; bottom: 1px; }
.hist { width: max-content; height: 14px; margin: 0 0 3px 52px; padding: 0 2px; border-radius: 2px; background: #51555b; color: #e6e6e6; font: 12px/14px "Noto Sans CJK SC", sans-serif; }
.hist.dim { color: #b4b7bb; }
.hist b, .entry input { font: 10px/14px "DejaVu Sans Mono", monospace; white-space: pre; }
.cmd { display: flex; align-items: center; gap: 5px; height: 22px; padding-left: 3px; background: #4b4d50; border-radius: 3px 0 0 3px; }
.entry { display: flex; align-items: center; gap: 2px; flex: 1; height: 21px; margin-left: -2px; padding: 0 4px; background: #bdbfc1; }
.entry input { flex: 1; margin-left: 1px; color: #111; }

/* Layout tabs */
.layouts { display: flex; height: 15px; padding-bottom: 1px; background: #f0f0f0; color: #111; }
.steps { display: flex; width: 50px; }
.steps button { display: grid; place-items: center; width: 12px; height: 13px; border-right: 1px solid #bbb; }
.steps path { fill: #777; stroke: #777; }
.lay { position: relative; width: 40px; height: 13px; line-height: 13px; white-space: nowrap; }
.lay::after { content: ""; position: absolute; right: -1px; top: 0; width: 1px; height: 13px; background: #333; transform: skewX(-25deg); }
.lay.on { width: 38px; background: #20262f; color: #fff; clip-path: polygon(0 0, 100% 0, 90% 100%, 12% 100%); }

/* Status bar */
.status { display: flex; align-items: start; height: 15px; overflow: hidden; background: linear-gradient(#909090, #747474); border-top: 1px solid #444; stroke: #222; }
.status output { flex: 1; padding: 2px 0 0 8px; font: 9px/15px "DejaVu Sans Mono", monospace; white-space: pre; color: #111; }
.status button { flex: none; display: flex; justify-content: center; width: 19px; height: 17px; background: linear-gradient(#d2d2d2, #9c9c9c); border-right: 1px solid #6e6e6e; white-space: nowrap; }
.status svg { width: 16px; height: 16px; }
.status .on { background: linear-gradient(#ddf2f7, #8fc3d2); }
.status .blue { background: #cfe5f7; }
.gap { width: 16px; height: 15px; }
.gap.wide { width: 38px; } .gap.thin { width: 7px; } .gap.end { width: 13px; }
.status .model { width: 26px; stroke: none; line-height: 16px; }
.status .ratio { width: 48px; align-items: center; gap: 2px; font-size: 10px; }
.status .bulb { width: 31px; background: #8a857a; border: 1px solid #444; }
.status .arrow { width: 12px; align-items: center; }

/* Insert dialog */
.dialog { position: absolute; left: 50%; top: 140px; width: 425px; margin-left: -212px; background: #f0f0f0; border: 1px solid #6b6b6b; box-shadow: 1px 2px 6px #000a; color: #111; font-family: "Noto Sans CJK SC", sans-serif; }
.dialog b, .dialog input[type=text] { font: 9px/13px "DejaVu Sans Mono", monospace; }
.dtitle { display: flex; align-items: center; gap: 5px; height: 24px; padding: 0 8px 0 5px; background: #fff; }
.dlogo { display: grid; place-items: center; width: 14px; height: 14px; background: #e88a84; }
.dtitle button { margin-left: auto; stroke: #222; }
.dbody { padding: 6px 7px 10px 6px; line-height: 13px; }
.namerow { display: flex; align-items: start; height: 26px; }
.namerow label { width: 45px; }
.combo { position: relative; width: 169px; height: 18px; margin-right: 11px; }
.combo select { display: block; width: 100%; height: 100%; appearance: none; background: #fff; border: 1px solid #2787d8; }
.combo svg { position: absolute; right: 4px; top: 7px; stroke: #555; }
.dialog .namerow button, .actions button { width: 65px; height: 16px; background: #e1e1e1; border: 1px solid #adadad; line-height: 13px; white-space: nowrap; }
.dialog .namerow button { margin-top: 1px; }
.path { height: 17px; }
.check { display: flex; align-items: center; height: 13px; white-space: nowrap; }
.check input { flex: none; position: relative; appearance: none; width: 12px; height: 12px; margin-right: 2px; background: #fff; border: 1px solid #333; }
.check input:checked::before { content: ""; position: absolute; left: 1px; top: 1px; width: 8px; height: 4px; border: solid #222; border-width: 0 0 1px 1px; transform: rotate(-45deg); }
.check.off { color: #838383; }
.check.off input { border-color: #ccc; }
.geo { margin: 0 0 4px 6px; }
.groups { display: flex; justify-content: space-between; }
fieldset { min-width: 0; margin: 0; padding: 0 12px 0 5px; border: 1px solid #dcdcdc; }
legend { padding: 0 2px; height: 15px; line-height: 15px; }
.ins, .scl { width: 132px; height: 128px; }
.stack { width: 132px; }
.rot { height: 62px; }
.unit { height: 66px; }
.row { display: flex; height: 18px; margin-top: 7px; padding-left: 6px; }
.check + .row { margin-top: 5px; }
.row label { width: 20px; }
.row input { flex: 1; min-width: 0; height: 18px; padding: 0 3px; background: #fff; border: 1px solid #7a7a7a; }
.row input:disabled { background: #f0f0f0; border-color: #ccc; color: #838383; }
.row input:read-only { background: #f0f0f0; }
.ins .row label { color: #9a9a9a; }
.scl .row { padding-left: 7px; }
.scl .uni { margin: 7px 0 0 27px; }
.stack .row { padding-left: 0; }
.stack fieldset { padding-right: 9px; }
.stack .row label { width: 45px; white-space: nowrap; }
.unit .row:first-of-type { margin-top: 1px; }
.dialog .row .cjk { font: 11px/13px "Noto Sans CJK SC", sans-serif; }
.actions { display: flex; gap: 8px; margin-top: 8px; }
.actions .check { margin-right: auto; }
.actions .primary { border: 2px solid #0078d7; line-height: 11px; }
```
